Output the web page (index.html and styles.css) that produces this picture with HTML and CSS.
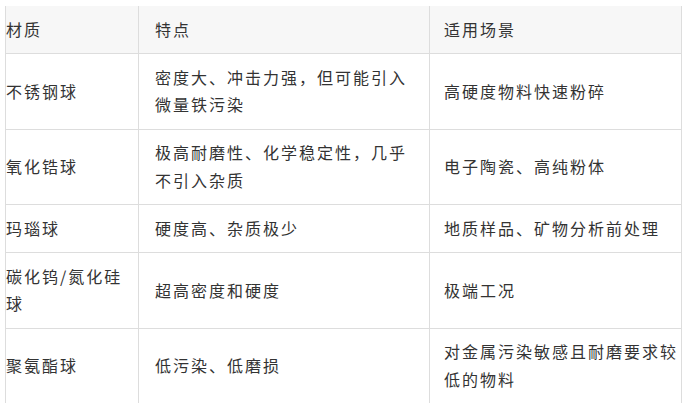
FILE: index.html
```html
<!DOCTYPE html>
<html lang="zh-CN">
<head>
<meta charset="utf-8">
<title>研磨球材质</title>
<link rel="stylesheet" href="styles.css">
</head>
<body>
<div class="table">
  <div class="cell head c1">材质</div>
  <div class="cell head c2">特点</div>
  <div class="cell head c3">适用场景</div>

  <div class="cell c1">不锈钢球</div>
  <div class="cell c2">密度大、冲击力强，但可能引入微量铁污染</div>
  <div class="cell c3">高硬度物料快速粉碎</div>

  <div class="cell c1">氧化锆球</div>
  <div class="cell c2">极高耐磨性、化学稳定性，几乎不引入杂质</div>
  <div class="cell c3">电子陶瓷、高纯粉体</div>

  <div class="cell c1">玛瑙球</div>
  <div class="cell c2">硬度高、杂质极少</div>
  <div class="cell c3">地质样品、矿物分析前处理</div>

  <div class="cell c1">碳化钨/氮化硅球</div>
  <div class="cell c2">超高密度和硬度</div>
  <div class="cell c3">极端工况</div>

  <div class="cell c1 last">聚氨酯球</div>
  <div class="cell c2 last">低污染、低磨损</div>
  <div class="cell c3 last">对金属污染敏感且耐磨要求较低的物料</div>
</div>
</body>
</html>
```

FILE: styles.css
```css
html, body {
  margin: 0;
  padding: 0;
  background: #ffffff;
}

body {
  padding: 6px 0 0 5px;
  font-family: "Noto Sans CJK SC", "Noto Sans", sans-serif;
  font-size: 16px;
  color: #333333;
}

.table {
  display: grid;
  grid-template-columns: 134px 291px 252px;
  width: 677px;
}

.cell {
  box-sizing: border-box;
  display: flex;
  align-items: center;
  padding: 9.75px 0;
  line-height: 27.5px;
  letter-spacing: 2px;
  border-right: 1px solid #dddddd;
  border-bottom: 1px solid #dddddd;
  word-break: break-all;
}

.cell.head {
  background: #f7f7f7;
}

.cell.c1 {
  border-left: 1px solid #dddddd;
  padding-left: 0;
  padding-right: 14px;
}

.cell.c2 {
  padding-left: 16px;
  padding-right: 14px;
}

.cell.c3 {
  padding-left: 14px;
  padding-right: 2px;
}

.cell.last {
  border-bottom: none;
}
```
